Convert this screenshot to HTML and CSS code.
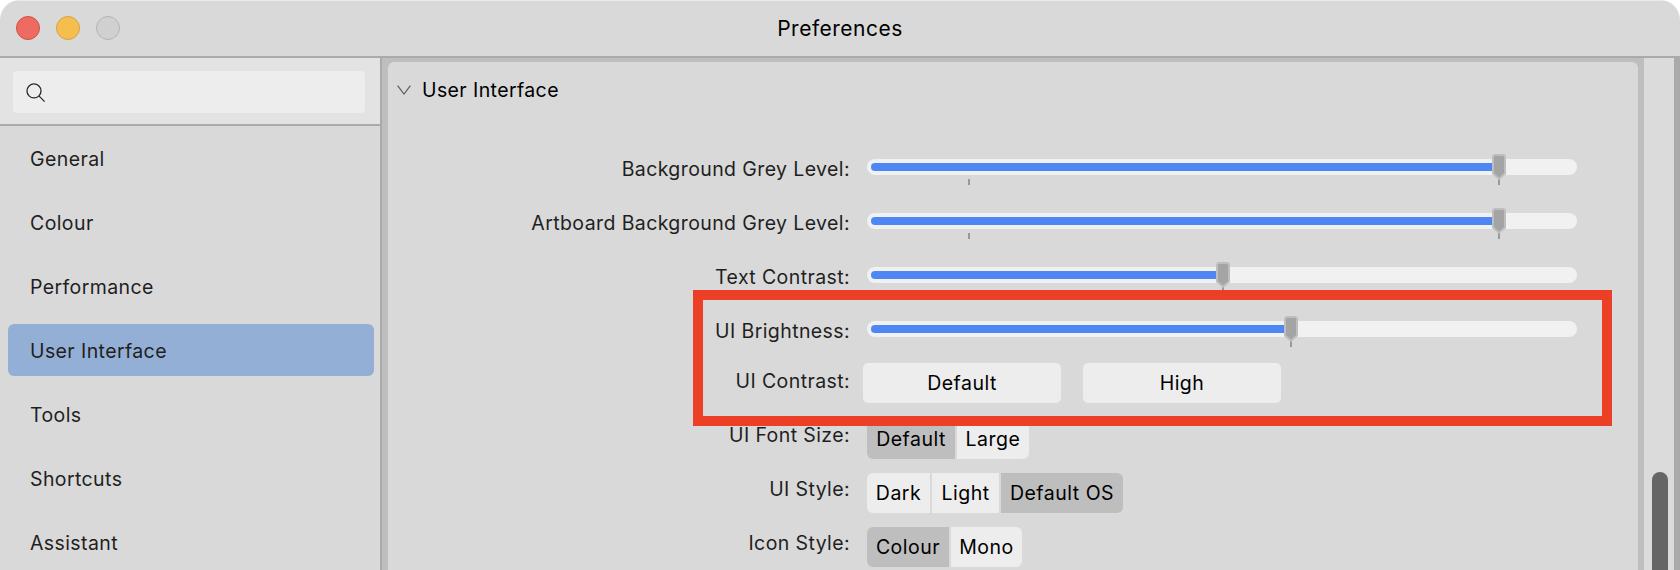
FILE: index.html
```html
<!DOCTYPE html>
<html lang="en">
<head>
    <meta charset="UTF-8">
    <meta name="viewport" content="width=device-width, initial-scale=1.0">
    <title>Preferences</title>
    <link rel="stylesheet" href="styles.css">
</head>
<body>
    <div class="window">
        <header class="titlebar">
            <div class="lights">
                <span class="light close"></span>
                <span class="light minimise"></span>
                <span class="light disabled"></span>
            </div>
            <h1 class="title">Preferences</h1>
        </header>
        <div class="content">
            <aside class="sidebar">
                <div class="search">
                    <div class="search-box">
                        <svg class="search-icon" width="20" height="20" viewBox="0 0 20 20">
                            <circle cx="8" cy="7.9" r="7" />
                            <path d="M12.9 12.9L18.6 18.6" />
                        </svg>
                    </div>
                </div>
                <nav class="menu">
                    <a class="item">General</a>
                    <a class="item">Colour</a>
                    <a class="item">Performance</a>
                    <a class="item active">User Interface</a>
                    <a class="item">Tools</a>
                    <a class="item">Shortcuts</a>
                    <a class="item">Assistant</a>
                </nav>
            </aside>
            <main class="main">
                <section class="panel">
                    <h2 class="heading">
                        <svg class="chevron" width="14" height="10" viewBox="0 0 14 10">
                            <path d="M0.6 0.6L7 9L13.4 0.6" />
                        </svg>
                        <span>User Interface</span>
                    </h2>

                    <div class="row">
                        <label class="label">Background Grey Level:</label>
                        <div class="slider">
                            <div class="fill" style="width: 628px"></div>
                            <i class="tick" style="left: 101px"></i>
                            <i class="tick" style="left: 631px"></i>
                            <svg class="thumb" style="left: 625px" width="14" height="26" viewBox="0 0 14 26"><path class="edge" d="M2 0H12L14 2V20L7 26L0 20V2Z" /><path d="M3 2H11L12 3V19L7 23.5L2 19V3Z" /></svg>
                        </div>
                    </div>
                    <div class="row">
                        <label class="label">Artboard Background Grey Level:</label>
                        <div class="slider">
                            <div class="fill" style="width: 628px"></div>
                            <i class="tick" style="left: 101px"></i>
                            <i class="tick" style="left: 631px"></i>
                            <svg class="thumb" style="left: 625px" width="14" height="26" viewBox="0 0 14 26"><path class="edge" d="M2 0H12L14 2V20L7 26L0 20V2Z" /><path d="M3 2H11L12 3V19L7 23.5L2 19V3Z" /></svg>
                        </div>
                    </div>
                    <div class="row">
                        <label class="label">Text Contrast:</label>
                        <div class="slider">
                            <div class="fill" style="width: 352px"></div>
                            <i class="tick" style="left: 355px"></i>
                            <svg class="thumb" style="left: 349px" width="14" height="26" viewBox="0 0 14 26"><path class="edge" d="M2 0H12L14 2V20L7 26L0 20V2Z" /><path d="M3 2H11L12 3V19L7 23.5L2 19V3Z" /></svg>
                        </div>
                    </div>
                    <div class="row">
                        <label class="label">UI Brightness:</label>
                        <div class="slider">
                            <div class="fill" style="width: 420px"></div>
                            <i class="tick" style="left: 423px"></i>
                            <svg class="thumb" style="left: 417px" width="14" height="26" viewBox="0 0 14 26"><path class="edge" d="M2 0H12L14 2V20L7 26L0 20V2Z" /><path d="M3 2H11L12 3V19L7 23.5L2 19V3Z" /></svg>
                        </div>
                    </div>
                    <div class="row contrast">
                        <label class="label">UI Contrast:</label>
                        <div class="buttons">
                            <button class="button">Default</button>
                            <button class="button">High</button>
                        </div>
                    </div>
                    <div class="row segmented">
                        <label class="label">UI Font Size:</label>
                        <div class="segments">
                            <button class="segment selected w88">Default</button>
                            <button class="segment w72">Large</button>
                        </div>
                    </div>
                    <div class="row segmented">
                        <label class="label">UI Style:</label>
                        <div class="segments">
                            <button class="segment w63">Dark</button>
                            <button class="segment w67">Light</button>
                            <button class="segment selected w122">Default OS</button>
                        </div>
                    </div>
                    <div class="row segmented">
                        <label class="label">Icon Style:</label>
                        <div class="segments">
                            <button class="segment selected w82">Colour</button>
                            <button class="segment w71">Mono</button>
                        </div>
                    </div>

                    <div class="highlight"></div>
                </section>
            </main>
            <div class="scrollbar">
                <div class="scroll-thumb"></div>
            </div>
        </div>
    </div>
</body>
</html>
```

FILE: styles.css
```css
* {
    box-sizing: border-box;
}
body, html {
    margin: 0;
    padding: 0;
    height: 100%;
    overflow: hidden;
    background: #fff;
    font-family: Inter, "Liberation Sans", sans-serif;
    font-size: 19.5px;
    letter-spacing: 0.4px;
    color: #1f1f1f;
}
.window {
    display: flex;
    flex-direction: column;
    height: 570px;
    border-radius: 20px 20px 0 0;
    overflow: hidden;
    background: #d9d9d9;
}
.titlebar {
    display: grid;
    grid-template-columns: 1fr auto 1fr;
    align-items: center;
    height: 58px;
    flex: none;
    padding: 0 16px;
    border-bottom: 2px solid #aaa;
    box-shadow: inset 0 1px 0 #ececec;
}
.lights {
    display: flex;
    gap: 16px;
}
.light {
    width: 24px;
    height: 24px;
    border-radius: 50%;
    border: 1px solid #b4b4b4;
    background: #d0d0d0;
}
.close {
    background: #ed6b60;
    border-color: #d05147;
}
.minimise {
    background: #f5bf4f;
    border-color: #d6a243;
}
.title {
    margin: 0;
    font-size: 21px;
    font-weight: 400;
    letter-spacing: 0.5px;
    color: #000;
}
.content {
    display: flex;
    flex: 1;
    min-height: 0;
}

/* Sidebar */
.sidebar {
    width: 382px;
    flex: none;
    border-right: 2px solid #aaa;
}
.search {
    height: 68px;
    padding: 13px 15px 11px 13px;
    background: #e3e3e3;
    border-bottom: 2px solid #aaa;
}
.search-box {
    height: 42px;
    padding: 12px 13px;
    border-radius: 4px;
    background: #ededed;
}
.search-icon {
    display: block;
    fill: none;
    stroke: #2b2b2b;
    stroke-width: 1.3;
}
.menu {
    display: flex;
    flex-direction: column;
    gap: 12px;
    padding: 6px 6px 0 8px;
}
.item {
    height: 52px;
    padding-left: 22px;
    border-radius: 6px;
    line-height: 54px;
}
.active {
    background: #93afd5;
}

/* Settings panel */
.main {
    flex: 1;
    padding: 4px 6px 0;
    background: #bebebe;
}
.panel {
    position: relative;
    height: 508px;
    border-radius: 6px 6px 0 0;
    background: #d9d9d9;
    overflow: hidden;
}
.heading {
    display: flex;
    align-items: center;
    gap: 11px;
    height: 80px;
    margin: 0;
    padding: 0 0 24px 9px;
    font-size: 19.5px;
    font-weight: 400;
    color: #000;
}
.chevron {
    fill: none;
    stroke: #5c5c5c;
    stroke-width: 1.2;
}
.row {
    display: grid;
    grid-template-columns: 462px 710px;
    column-gap: 17px;
    align-items: center;
    height: 54px;
}
.label {
    text-align: right;
}
.slider {
    position: relative;
    height: 16px;
    margin-bottom: 4px;
    padding: 4px;
    border-radius: 8px;
    background: #f1f1f1;
}
.fill {
    height: 8px;
    border-radius: 4px 0 0 4px;
    background: #4e86f3;
}
.tick {
    position: absolute;
    top: 20px;
    width: 2px;
    height: 6px;
    background: #999;
}
.thumb {
    position: absolute;
    top: -5px;
    fill: #a4a4a4;
}
.edge {
    fill: #bebebe;
}
.contrast {
    height: 50px;
    margin-bottom: 4px;
}
.contrast .label {
    margin-bottom: 4px;
}
.buttons {
    display: flex;
    gap: 22px;
    margin-left: -4px;
}
.button, .segment {
    height: 40px;
    padding: 0;
    border: none;
    font: inherit;
    letter-spacing: 0.5px;
    color: #000;
    background: #ededed;
}
.button {
    width: 198px;
    border-radius: 5px;
}
.segmented .label {
    margin-bottom: 8px;
}
.segments {
    display: flex;
    gap: 2px;
}
.segment:first-child {
    border-radius: 6px 0 0 6px;
}
.segment:last-child {
    border-radius: 0 6px 6px 0;
}
.selected {
    background: #bebebe;
}
.w63 { width: 63px; }
.w67 { width: 67px; }
.w71 { width: 71px; }
.w72 { width: 72px; }
.w82 { width: 82px; }
.w88 { width: 88px; }
.w122 { width: 122px; }
.highlight {
    position: absolute;
    left: 305px;
    top: 228px;
    width: 919px;
    height: 136px;
    border: 10px solid #eb4026;
}

/* Scrollbar */
.scrollbar {
    width: 36px;
    flex: none;
    padding: 414px 6px 0 8px;
    border-right: 6px solid #aaa;
    background: #dbdbdb;
}
.scroll-thumb {
    width: 16px;
    height: 110px;
    border-radius: 8px 8px 0 0;
    background: #666;
}
```
